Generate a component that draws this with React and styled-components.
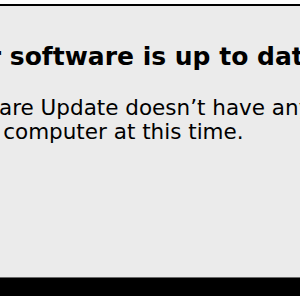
import React from "react";
import styled, { createGlobalStyle } from "styled-components";

const Global = createGlobalStyle`
  html, body { margin: 0; padding: 0; background: #ffffff; }
  body { width: 300px; height: 300px; overflow: hidden; }
`;

const Screen = styled.div`
  width: 300px;
  height: 300px;
  overflow: hidden;
  display: flex;
  flex-direction: column;
  padding-top: 4px;
  box-sizing: border-box;
  background: #ffffff;
`;

const Dialog = styled.div`
  flex: 0 0 271px;
  background: #ebebeb;
  border-top: 2px solid #000000;
  border-bottom: 1px solid #6a6a6a;
  overflow: hidden;
  display: flex;
`;

const Content = styled.div`
  margin-left: -62px;
  padding-top: 36px;
  display: flex;
  flex-direction: column;
  gap: 24px;
  font-family: "DejaVu Sans", Verdana, sans-serif;
  color: #000000;
  white-space: nowrap;
`;

const Title = styled.h1`
  margin: 0;
  font-size: 25px;
  line-height: 30px;
  font-weight: bold;
`;

const Message = styled.p`
  margin: 0;
  display: flex;
  flex-direction: column;
  font-size: 21.5px;
  line-height: 24px;
  font-weight: normal;
`;

const Line = styled.span`
  display: block;
  padding-left: ${(p) => p.$shift || 0}px;
`;

const BottomBar = styled.div`
  flex: 0 0 18px;
  background: #000000;
`;

export default function App() {
  return (
    <>
      <Global />
      <Screen>
        <Dialog>
          <Content>
            <Title>Your software is up to date.</Title>
            <Message>
              <Line $shift={1}>Software Update doesn’t have any new software for</Line>
              <Line $shift={10}>your computer at this time.</Line>
            </Message>
          </Content>
        </Dialog>
        <BottomBar />
      </Screen>
    </>
  );
}
